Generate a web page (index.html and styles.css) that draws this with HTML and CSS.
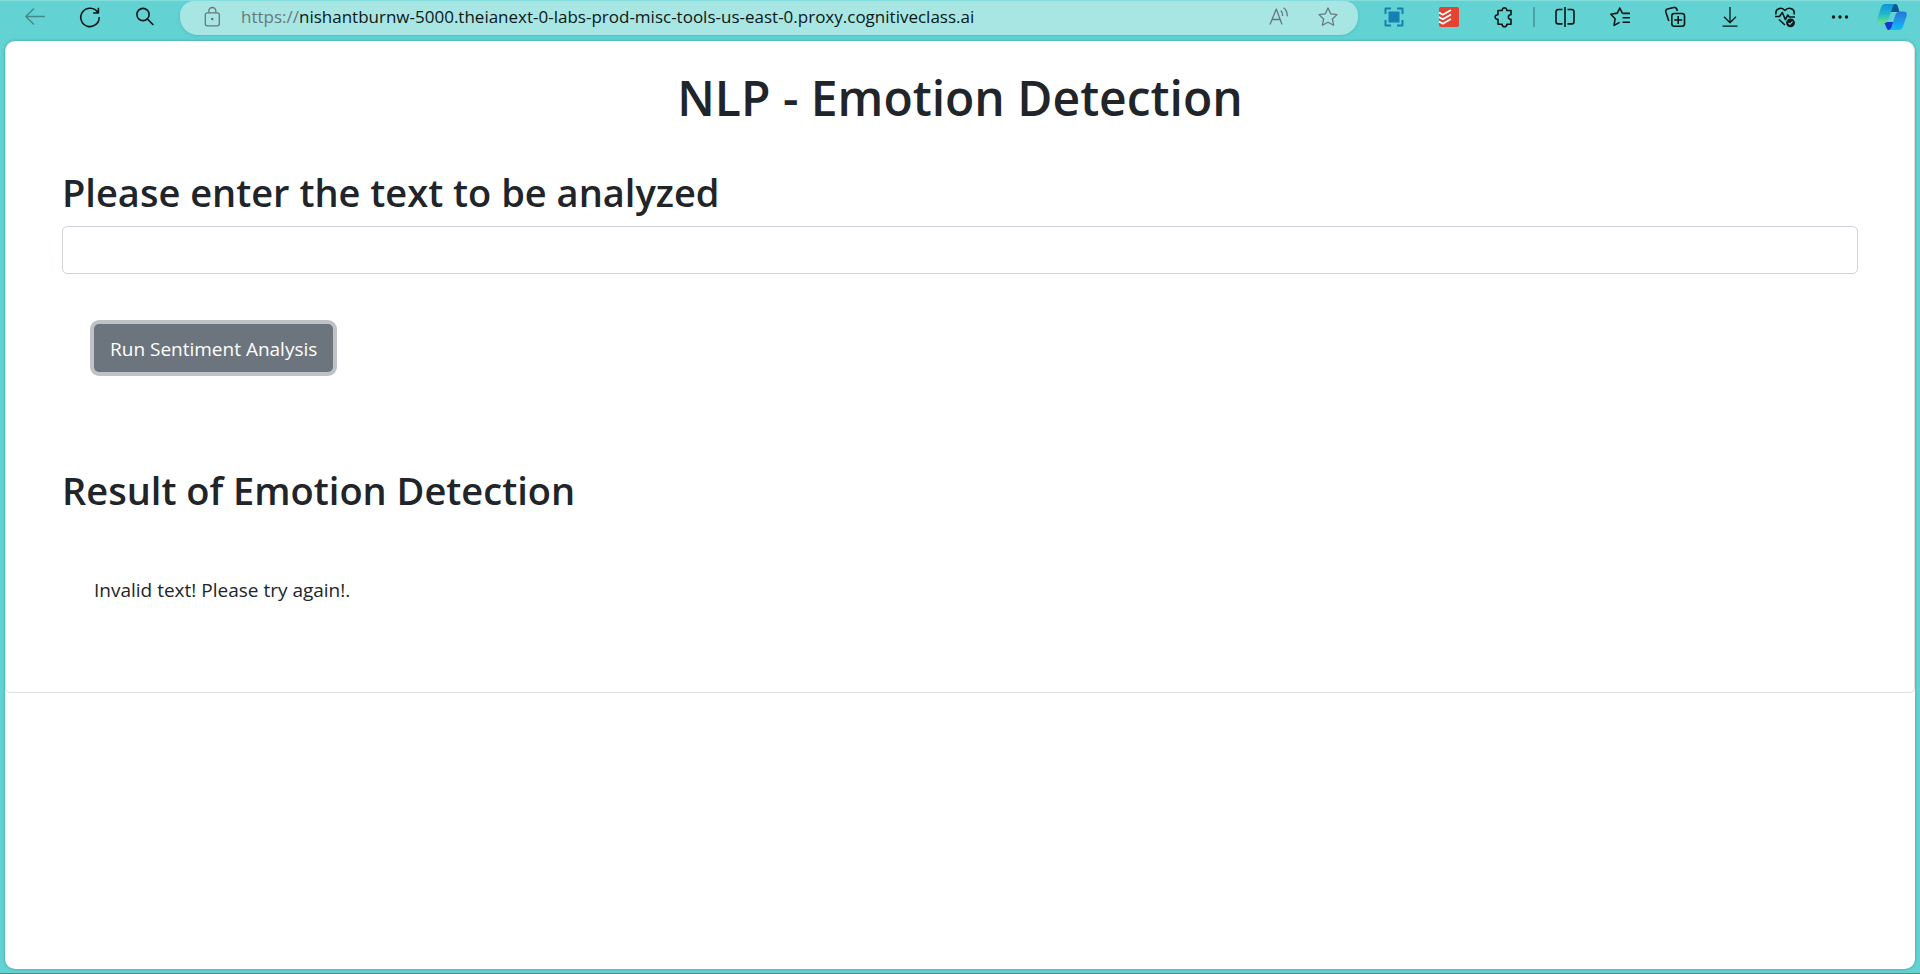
FILE: index.html
```html
<!DOCTYPE html>
<html lang="en">
<head>
<meta charset="utf-8">
<title>NLP - Emotion Detection</title>
<link rel="stylesheet" href="styles.css">
</head>
<body>
<header class="toolbar">
  <nav class="tools" aria-label="Navigation">
    <button class="tool muted" aria-label="Back"><svg class="icon" viewBox="0 0 20 20"><path d="M9 1.500 .8 9.500 9 17.500M.8 9.500H20"/></svg></button>
    <button class="tool" aria-label="Refresh"><svg class="icon bold" viewBox="0 0 20 20"><path d="M17.800 5.500A9.200 9.200 0 1 0 19.200 10M18.400.8V6h-5.200"/></svg></button>
    <button class="tool" aria-label="Search"><svg class="icon bold" viewBox="0 0 20 20"><circle cx="8" cy="7.500" r="6.100"/><path d="m12.400 12 6 6"/></svg></button>
  </nav>
  <form class="address">
    <button type="button" class="tool gray" aria-label="Site information"><svg class="icon" viewBox="0 0 20 20"><rect x="3.300" y="5.800" width="14" height="13" rx="2"/><path d="M6.800 5.800V4a3.500 3.500 0 0 1 7 0v1.800"/><circle class="solid" cx="10.300" cy="12" r="1.300"/></svg></button>
    <label class="scheme" for="url">https://</label>
    <input class="url" id="url" type="text" value="nishantburnw-5000.theianext-0-labs-prod-misc-tools-us-east-0.proxy.cognitiveclass.ai">
    <button type="button" class="tool narrow gray" aria-label="Read aloud"><svg class="icon" viewBox="0 0 20 20"><path d="M1 17.500 7.300 2 13 17.500M3 12.500h8.200M11.800 3.500a7 7 0 0 1 1.800 5.500M14.600.8a10 10 0 0 1 3.600 8.600"/></svg></button>
    <button type="button" class="tool narrow gray" aria-label="Add to favorites"><svg class="icon" viewBox="0 0 20 20"><path d="m10 1 2.700 5.800 6.300.8-4.600 4.400 1.200 6.300L10 15.200l-5.600 3.100L5.600 12 1 7.600l6.300-.8z"/></svg></button>
  </form>
  <div class="tools">
    <button class="tool" aria-label="Screen capture"><svg class="icon capture" viewBox="0 0 20 20"><path d="M1.500 7V1.500H7M13 1.500h5.500V7M18.500 13v5.500H13M7 18.500H1.500V13"/><rect class="solid" x="4.500" y="4.500" width="11" height="11"/></svg></button>
    <button class="tool" aria-label="Todoist"><svg class="icon todoist" viewBox="0 0 20 20"><rect class="tile" width="20" height="20" rx="2"/><path d="m0 5.500 3.800 2.200 8.200-4.600M0 10l3.800 2.200L12 7.600M0 14.500l3.800 2.200 8.200-4.600"/></svg></button>
    <button class="tool" aria-label="Extensions"><svg class="icon bold" viewBox="0 0 20 20"><path d="M4 3.500h4.200C8 0 13 0 12.800 3.500H17v4.200c-3.500-.4-3.500 5.100 0 4.700v4.800h-4.200c.2 3.300-4.800 3.300-4.600 0H4v-4.800C.2 12.600.2 7.500 4 7.700z"/></svg></button>
    <span class="divider"></span>
    <button class="tool" aria-label="Split screen"><svg class="icon bold" viewBox="0 0 20 20"><path d="M7.500 2.500H3.200A2.200 2.200 0 0 0 1 4.700v10a2.200 2.200 0 0 0 2.200 2.200h4.300M12.500 2.500h4.300A2.200 2.200 0 0 1 19 4.700v10a2.200 2.200 0 0 1-2.200 2.200h-4.300M10 0v20"/></svg></button>
    <button class="tool" aria-label="Favorites"><svg class="icon bold" viewBox="0 0 20 20"><path d="M15 6.200 12.200 6 9.800 1 7.300 6.100.8 7.200l4.300 4.500-1 6.700 5.500-3M12.500 6.400h7.500M12.500 10.800h7.500M12.500 15.200h7.500"/></svg></button>
    <button class="tool" aria-label="Collections"><svg class="icon bold" viewBox="0 0 20 20"><rect x="6.800" y="6.500" width="12.700" height="12.700" rx="2.500"/><path d="M13.200 9v8M9.200 13h8M3.800 14 .8 5a2.400 2.400 0 0 1 1.600-3L8.800.5a2.400 2.400 0 0 1 3 1.600l.6 1.900"/></svg></button>
    <button class="tool" aria-label="Downloads"><svg class="icon" viewBox="0 0 20 20"><path d="M10 0v15.500M4 9.800l6 6 6-6M2.500 19.200h15"/></svg></button>
    <button class="tool" aria-label="Browser essentials"><svg class="icon bold" viewBox="0 0 20 20"><path d="M1 7.500C-.2 1.500 6.500-.8 10 3.500 13.500-.8 20.500 1.500 19 7.500M0 9.500h4.500l2.800-4 3 7 2.500-4.500 1.500 2H20M4 12.500l6 5.500"/><circle class="solid" cx="15.500" cy="15.800" r="4.400"/><path class="check" d="m13.500 15.900 1.400 1.400 2.700-2.900"/></svg></button>
    <button class="tool" aria-label="More"><svg class="icon" viewBox="0 0 20 20"><circle class="solid" cx="3.500" cy="10" r="1.700"/><circle class="solid" cx="10" cy="10" r="1.700"/><circle class="solid" cx="16.500" cy="10" r="1.700"/></svg></button>
    <button class="tool copilot" aria-label="Copilot"><svg class="logo" viewBox="0 0 30 26">
      <defs>
        <linearGradient id="left" x1="0" y1="0" x2="0" y2="1"><stop offset="0" stop-color="#0a97d8"/><stop offset=".5" stop-color="#20b5cb"/><stop offset="1" stop-color="#65e48c"/></linearGradient>
        <linearGradient id="right" x1="0" y1="0" x2="0" y2="1"><stop offset="0" stop-color="#2a74dc"/><stop offset="1" stop-color="#12baf5"/></linearGradient>
      </defs>
      <path fill="#0b5793" d="M14 0h4.500c1.400 0 2 1 2.400 2.400L22.500 8H13z"/>
      <path fill="#1839cf" d="M7 18h10l-2.500 8h-2.300c-1.400 0-2.200-.8-2.700-2.300z"/>
      <path fill="url(#left)" d="M8.800 0h9.500c-1.500.3-2.200 1.500-2.700 3l-4 12c-.8 2.500-2 4-4.300 4H3.500C.5 19-.3 16.800.5 14L4 3.500C4.900.9 6.200 0 8.800 0z"/>
      <path fill="url(#right)" d="M21.200 26h-9.500c1.500-.3 2.200-1.500 2.700-3l4-12c.8-2.300 2-3.600 4.300-3.600h3.800c3 0 3.900 1.800 3.100 4.600L26 22.500c-.9 2.600-2.200 3.500-4.800 3.500z"/>
    </svg></button>
  </div>
</header>
<main class="page">
  <section class="card">
    <h1 class="title">NLP - Emotion Detection</h1>
    <div class="group">
      <h2 class="heading"><label for="text">Please enter the text to be analyzed</label></h2>
      <input class="field" id="text" type="text">
      <button class="run">Run Sentiment Analysis</button>
    </div>
    <div class="group">
      <h2 class="heading">Result of Emotion Detection</h2>
      <p class="result">Invalid text! Please try again!.</p>
    </div>
  </section>
</main>
</body>
</html>
```
FILE: styles.css
```css
* {
  box-sizing: border-box;
}

body {
  margin: 0;
  min-height: 100vh;
  display: flex;
  flex-direction: column;
  padding: 0 5px 4px;
  background: #62d2d2;
  border-top: 1px solid #83dddc;
  border-bottom: 1px solid #6c8080;
  color: #212529;
  font-family: "Open Sans", "Noto Sans", sans-serif;
  font-size: 19px;
  line-height: 30px;
}

button,
input {
  font: inherit;
  color: inherit;
}

.toolbar {
  display: flex;
  height: 40px;
  padding: 0 3px 0 2px;
  margin-right: -5px;
}

.tools {
  display: flex;
}

.tool {
  display: flex;
  align-items: center;
  justify-content: center;
  width: 55px;
  height: 32px;
  padding: 0;
  border: 0;
  background: none;
  color: #0b1717;
}

.narrow {
  width: 49px;
}

.muted {
  color: #3f8a8a;
}

.gray {
  color: #66797a;
}

.icon {
  width: 20px;
  height: 20px;
  fill: none;
  stroke: currentColor;
  stroke-width: 1.3;
  stroke-linejoin: round;
  overflow: visible;
}

.bold {
  stroke-width: 1.6;
}

.solid {
  fill: currentColor;
  stroke: none;
}

.check {
  stroke: #62d2d2;
  stroke-width: 1.2;
}

.capture {
  color: #1580b2;
  stroke-width: 2;
}

.todoist {
  stroke: #fff;
  stroke-width: 1.7;
}

.tile {
  fill: #e44332;
  stroke: none;
}

.divider {
  width: 2px;
  height: 20px;
  margin: 6px 2px 0;
  background: #4ba3a4;
}

.copilot {
  width: 50px;
}

.logo {
  width: 30px;
  height: 26px;
}

.address {
  flex: 1;
  display: flex;
  height: 34px;
  margin: 0 8px;
  padding: 0 6px 0 4px;
  border-radius: 14px 14px 18px 18px;
  background: #a8e6e4;
  box-shadow: 0 1px 3px #4fc0c1;
}

.scheme,
.url {
  height: 32px;
  font-size: 17px;
  line-height: 32px;
}

.scheme {
  padding-left: 2px;
  color: #66797a;
}

.url {
  flex: 1;
  min-width: 0;
  padding: 0;
  border: 0;
  background: none;
  color: #0b1717;
  outline: 0;
}

.page {
  flex: 1;
  border-radius: 10px;
  background: #fff;
  box-shadow: 0 0 3px #3f9a9a;
}

.card {
  display: flex;
  flex-direction: column;
  padding: 27px 56px 87px;
  border: 1px solid #dfdfdf;
  border-top: 0;
  border-radius: 10px 10px 5px 5px;
}

.title {
  margin: 0 0 40px;
  font-size: 48px;
  font-weight: 600;
  line-height: 60px;
  text-align: center;
}

.heading {
  margin: 0 0 10px;
  font-size: 38px;
  font-weight: 600;
  line-height: 48px;
}

.field {
  display: block;
  width: 100%;
  height: 48px;
  padding: 8px 15px;
  border: 1px solid #ced4da;
  border-radius: 5px;
  background: #fff;
}

.run {
  display: block;
  height: 48px;
  margin: 50px 32px 94px;
  padding: 2px 16px 0;
  border: 0;
  border-radius: 5px;
  background: #6c757d;
  box-shadow: 0 0 0 4px #bfc3c7;
  color: #fff;
}

.result {
  margin: 61px 32px 0;
}
```
